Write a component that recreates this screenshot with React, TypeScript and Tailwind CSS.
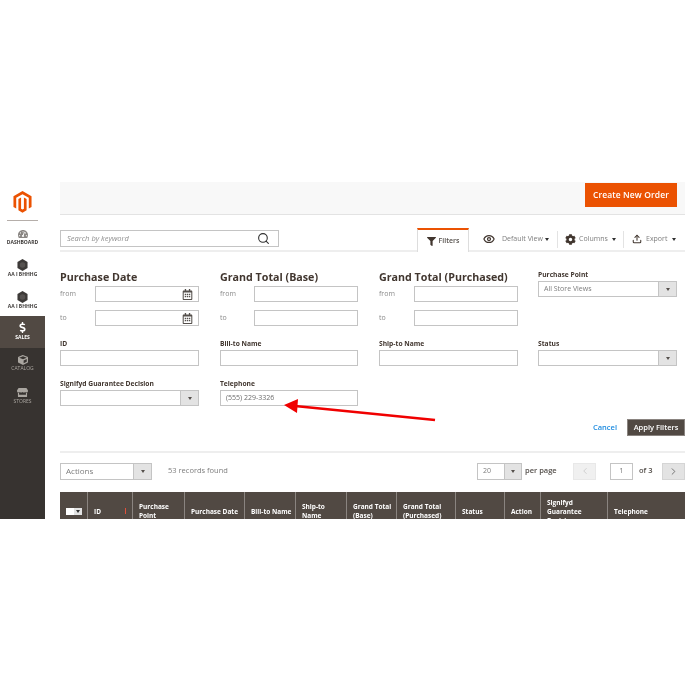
import { Search, Eye, ChevronLeft, ChevronRight, Upload } from "lucide-react";
import { FaFilter, FaCog, FaDollarSign, FaStore, FaCube, FaTachometerAlt, FaRegCalendarAlt } from "react-icons/fa";

const columns = [
  { name: "ID", width: "w-[45px]" },
  { name: "Purchase Point", width: "w-[52px]" },
  { name: "Purchase Date", width: "w-[60px]" },
  { name: "Bill-to Name", width: "w-[51px]" },
  { name: "Ship-to Name", width: "w-[51px]" },
  { name: "Grand Total (Base)", width: "w-[50px]" },
  { name: "Grand Total (Purchased)", width: "w-[59px]" },
  { name: "Status", width: "w-[49px]" },
  { name: "Action", width: "w-[36px]" },
  { name: "Signifyd Guarantee Decision", width: "w-[67px]" },
  { name: "Telephone", width: "w-[77px]" },
];

function Caret({ className = "border-t-[#303030]" }: { className?: string }) {
  return <span className={`inline-block w-0 h-0 border-x-[2.5px] border-x-transparent border-t-[3px] ${className}`} />;
}

function Hex() {
  return (
    <svg width="11" height="12" viewBox="0 0 12 13" className="my-[0.5px]">
      <polygon points="6,0 11.5,3.2 11.5,9.8 6,13 0.5,9.8 0.5,3.2" fill="#3d3a38" />
      <circle cx="6" cy="6.5" r="3" fill="#565250" />
    </svg>
  );
}

function Logo() {
  return (
    <svg width="19" height="22" viewBox="0 0 24 28" fill="#eb5202">
      <path d="M12 0L23.5 6.6V20.4L20 22.4V8.6L12 4L4 8.6V22.4L0.5 20.4V6.6Z" />
      <path d="M13.8 8.2V22.6L12 23.7L10.2 22.6V8.2L6.8 10.2V24.4L12 27.6L17.2 24.4V10.2Z" />
    </svg>
  );
}

function TextBox({ className = "", value = "", icon = false }: { className?: string; value?: string; icon?: boolean }) {
  return (
    <div className={`h-4 border border-[#c4c4c4] bg-white flex items-center justify-between pl-[5px] pr-[5px] text-[7px] text-[#6b6b6b] ${className}`}>
      <span>{value}</span>
      {icon && <FaRegCalendarAlt className="text-[11px] text-[#55504c]" />}
    </div>
  );
}

function SelectBox({ className = "", value = "", arrow = "w-[18px]" }: { className?: string; value?: string; arrow?: string }) {
  return (
    <div className={`h-4 border border-[#c4c4c4] bg-white flex items-stretch text-[7px] text-[#7d7d7d] ${className}`}>
      <span className="flex-1 flex items-center pl-[5px]">{value}</span>
      <span className={`${arrow} bg-[#e3e3e3] border-l border-[#c4c4c4] flex items-center justify-center`}>
        <Caret className="border-t-[#55504c]" />
      </span>
    </div>
  );
}

function Range({ title, width, icon = false }: { title: string; width: string; icon?: boolean }) {
  return (
    <div className={width}>
      <h3 className="h-[15px] text-[10.7px] leading-[13px] font-bold text-[#41362f] whitespace-nowrap">{title}</h3>
      <div className="flex items-center justify-between">
        <span className="mt-px text-[7px] text-[#8a8a8a]">from</span>
        <TextBox className="w-[104px]" icon={icon} />
      </div>
      <div className="flex items-center justify-between mt-2">
        <span className="mt-px text-[7px] text-[#8a8a8a]">to</span>
        <TextBox className="w-[104px]" icon={icon} />
      </div>
    </div>
  );
}

function Label({ children }: { children: string }) {
  return <div className="h-[11px] mb-px text-[6.7px] leading-[11px] font-bold text-[#41362f] whitespace-nowrap">{children}</div>;
}

function NavItem({ icon, label, muted }: { icon: React.ReactNode; label: string; muted?: boolean }) {
  return (
    <div className={`flex flex-col items-center text-[5px] leading-[7px] ${muted ? "text-[#aaa6a0]" : "font-bold text-[#3d3a38]"}`}>
      {icon}
      <span className="whitespace-nowrap">{label}</span>
    </div>
  );
}

export default function App() {
  return (
    <div className="relative w-[700px] h-[700px] bg-white font-['Open_Sans',sans-serif] overflow-hidden blur-[0.35px]">
      <div className="flex pt-[182px] h-[519px]">
        {/* sidebar */}
        <aside className="w-[45px] flex flex-col shrink-0">
          <div className="h-[134px] flex flex-col items-center">
            <div className="mt-[9px]"><Logo /></div>
            <div className="w-[31px] border-t border-[#b5aeaa] mt-[7px] mb-[8px]" />
            <NavItem icon={<FaTachometerAlt className="text-[10px] text-[#8a8683]" />} label="DASHBOARD" />
            <div className="mt-[12px]"><NavItem icon={<Hex />} label="AA I BHHHG" /></div>
            <div className="mt-[12px]"><NavItem icon={<Hex />} label="AA I BHHHG" /></div>
          </div>
          <div className="flex-1 bg-[#373330] flex flex-col">
            <div className="h-[32px] bg-[#514943] flex flex-col items-center pt-[6px] text-white text-[5px] leading-[7px] font-bold">
              <FaDollarSign className="text-[11px]" />
              <span className="mt-[1px]">SALES</span>
            </div>
            <div className="mt-[7px]"><NavItem muted icon={<FaCube className="text-[10px] text-[#aaa6a0]" />} label="CATALOG" /></div>
            <div className="mt-[15px]"><NavItem muted icon={<FaStore className="text-[11px] text-[#aaa6a0]" />} label="STORES" /></div>
          </div>
        </aside>

        <main className="ml-[15px] w-[625px] shrink-0">
          {/* page actions */}
          <div className="h-[33px] bg-[#f8f8f8] border-b border-[#e3e3e3] flex justify-end items-start pt-px pr-2">
            <button className="w-[92px] h-[24px] bg-[#eb5202] text-white text-[8.5px] font-semibold tracking-[0.1px]">Create New Order</button>
          </div>

          {/* search + toolbar */}
          <div className="mt-[13px] h-[24px] border-b-2 border-[#eeeeee] flex text-[7px] text-[#7d7d7d] whitespace-nowrap">
            <div className="w-[219px] h-[17px] mt-[2px] shrink-0 border border-[#c4c4c4] flex items-center justify-between pl-[6px] pr-[8px] text-[7.5px] italic text-[#8f8f8f]">
              <span>Search by keyword</span>
              <Search size={13} strokeWidth={2} className="text-[#303030]" />
            </div>
            <div className="ml-[138px] w-[52px] h-[24px] shrink-0 border-t-2 border-t-[#eb5202] border-x border-x-[#dddddd] bg-white flex items-center justify-center gap-[3px] text-[7px] font-semibold text-[#55504c]">
              <FaFilter className="text-[9px] text-[#41362f]" />
              <span>Filters</span>
            </div>
            <div className="flex items-center h-[22px] ml-[14px]">
              <Eye size={12} strokeWidth={2.5} className="text-[#41362f] shrink-0" />
              <span className="ml-[7px] w-[37px]">Default View</span>
              <span className="ml-[6px] flex"><Caret /></span>
              <span className="ml-[8px] w-px h-[17px] bg-[#e3e3e3]" />
              <FaCog className="ml-[7px] text-[11px] text-[#41362f] shrink-0" />
              <span className="ml-[3px] w-[27px]">Columns</span>
              <span className="ml-[6px] flex"><Caret /></span>
              <span className="ml-[7px] w-px h-[17px] bg-[#e3e3e3]" />
              <Upload size={10} strokeWidth={2.5} className="ml-[8px] text-[#41362f] shrink-0" />
              <span className="ml-[4px] w-[20px]">Export</span>
              <span className="ml-[6px] flex"><Caret /></span>
            </div>
          </div>

          {/* filters */}
          <div className="mt-[19px] grid grid-cols-[160px_159px_159px_139px] gap-y-[12px]">
            <Range title="Purchase Date" width="w-[139px]" icon />
            <Range title="Grand Total (Base)" width="w-[138px]" />
            <Range title="Grand Total (Purchased)" width="w-[139px]" />
            <div className="-mt-[2px]">
              <Label>Purchase Point</Label>
              <SelectBox value="All Store Views" />
            </div>
            <div className="w-[139px]"><Label>ID</Label><TextBox /></div>
            <div className="w-[138px]"><Label>Bill-to Name</Label><TextBox /></div>
            <div className="w-[139px]"><Label>Ship-to Name</Label><TextBox /></div>
            <div className="w-[139px]"><Label>Status</Label><SelectBox /></div>
            <div className="w-[139px]"><Label>Signifyd Guarantee Decision</Label><SelectBox /></div>
            <div className="w-[138px]"><Label>Telephone</Label><TextBox value="(555) 229-3326" /></div>
          </div>

          <div className="mt-[13px] flex justify-end items-center gap-[10px]">
            <a className="text-[7.5px] font-semibold text-[#1f8ce0]">Cancel</a>
            <button className="w-[58px] h-[17px] bg-[#514943] border border-[#8a8480] text-white text-[7.5px] font-semibold">Apply Filters</button>
          </div>

          <div className="mt-[15px] border-t-2 border-[#eeeeee]" />

          {/* grid toolbar */}
          <div className="mt-[9px] h-[18px] flex items-center text-[#55504c] whitespace-nowrap">
            <SelectBox className="w-[92px] h-[17px] text-[8px]" value="Actions" />
            <span className="ml-[16px] text-[7.5px] text-[#7d7d7d]">53 records found</span>
            <SelectBox className="ml-auto w-[45px] h-[17px] text-[7.5px]" value="20" arrow="w-[17px]" />
            <span className="ml-[3px] w-[31px] text-[7.5px] font-semibold">per page</span>
            <div className="ml-[17px] w-[23px] h-[17px] bg-[#f0f0f0] border border-[#e8e8e8] flex items-center justify-center">
              <ChevronLeft size={10} className="text-[#c9c9c9]" />
            </div>
            <div className="ml-[14px] w-[23px] h-[17px] border border-[#c4c4c4] flex items-center justify-center text-[7.5px] text-[#7d7d7d]">1</div>
            <span className="ml-[6px] w-[23px] text-[7.5px] font-semibold">of 3</span>
            <div className="w-[23px] h-[17px] bg-[#e3e3e3] border border-[#d5d5d5] flex items-center justify-center">
              <ChevronRight size={11} className="text-[#6b6b6b]" />
            </div>
          </div>

          {/* table head, cut off by the screenshot */}
          <div className="mt-[12px] h-[27px] overflow-hidden">
            <div className="flex h-[38px] bg-[#514943] text-white text-[6.5px] leading-[9px] font-bold">
              <div className="w-[28px] border-r border-[#8a8480] flex items-center justify-center">
                <span className="w-[16px] h-[7px] bg-white flex justify-end">
                  <span className="w-[8px] h-[7px] bg-[#e3e3e3] flex items-center justify-center"><Caret /></span>
                </span>
              </div>
              {columns.map((col) => (
                <div key={col.name} className={`${col.width} relative border-r border-[#8a8480] last:border-r-0 flex items-center pl-[6px] pr-[2px]`}>
                  {col.name}
                  {col.name === "ID" && <span className="absolute right-[6px] top-[16px] w-[1.5px] h-[6px] bg-[#e0503a]" />}
                </div>
              ))}
            </div>
          </div>
        </main>
      </div>

      {/* red annotation arrow */}
      <svg className="absolute left-0 top-0" width="700" height="700" viewBox="0 0 700 700">
        <line x1="435" y1="420" x2="295" y2="406" stroke="#f00000" strokeWidth="2.5" />
        <polygon points="284,405 298,399 297,413" fill="#f00000" />
      </svg>
    </div>
  );
}
